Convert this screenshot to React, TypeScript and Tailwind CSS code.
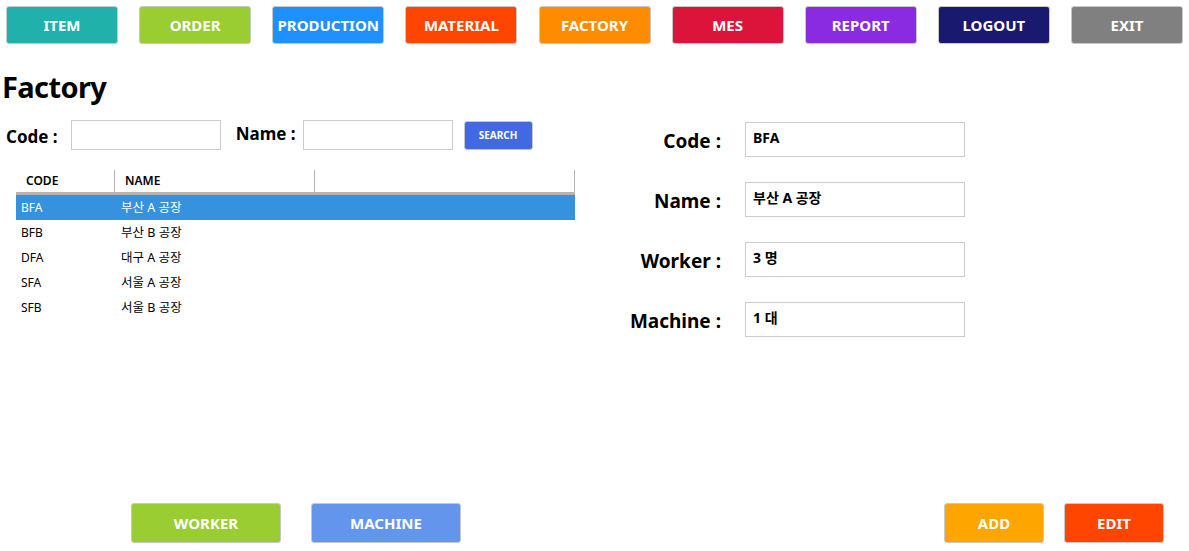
const navItems = [
  { label: "ITEM", color: "bg-[#20b2aa]" },
  { label: "ORDER", color: "bg-[#9acd32]" },
  { label: "PRODUCTION", color: "bg-[#1e90ff]" },
  { label: "MATERIAL", color: "bg-[#ff4500]" },
  { label: "FACTORY", color: "bg-[#ff8c00]" },
  { label: "MES", color: "bg-[#dc143c]" },
  { label: "REPORT", color: "bg-[#8a2be2]" },
  { label: "LOGOUT", color: "bg-[#191970]" },
  { label: "EXIT", color: "bg-[#808080]" },
];

const factories = [
  { code: "BFA", name: "부산 A 공장" },
  { code: "BFB", name: "부산 B 공장" },
  { code: "DFA", name: "대구 A 공장" },
  { code: "SFA", name: "서울 A 공장" },
  { code: "SFB", name: "서울 B 공장" },
];

const details = [
  { label: "Code :", value: "BFA" },
  { label: "Name :", value: "부산 A 공장" },
  { label: "Worker :", value: "3 명" },
  { label: "Machine :", value: "1 대" },
];

const font = { fontFamily: '"Noto Sans", "Noto Sans CJK KR", sans-serif' };

export default function App() {
  return (
    <div className="w-[1189px] h-[551px] bg-white text-black overflow-hidden" style={font}>
      {/* top menu */}
      <div className="flex justify-between w-[1183px] pl-[6px] pt-[6px] h-[50px]">
        {navItems.map((n) => (
          <button
            key={n.label}
            className={`${n.color} w-[112px] h-[38px] rounded-[3px] border border-[#c8c8c8] text-white font-bold text-[15px]`}
          >
            {n.label}
          </button>
        ))}
      </div>

      <h1 className="mt-[17px] h-[40px] leading-[40px] pl-[2px] text-[29px] tracking-[-0.6px] font-bold">Factory</h1>

      <div className="flex h-[390px] mt-[3px]">
        {/* left: search + list */}
        <div className="w-[575px]">
          <div className="flex items-center h-[30px] mt-[10px] pl-[6px]">
            <span className="text-[17px] font-bold mt-[4px]">Code :</span>
            <input className="ml-[13px] w-[150px] h-[30px] border border-[#cccccc] outline-none" />
            <span className="ml-[15px] text-[17px] font-bold -mt-[3px]">Name :</span>
            <input className="ml-[7px] w-[150px] h-[30px] border border-[#cccccc] outline-none" />
            <button className="ml-[11px] w-[69px] h-[29px] rounded-[3px] border border-[#c8c8c8] bg-[#4169e1] text-white text-[10px] font-bold">
              SEARCH
            </button>
          </div>

          <div className="ml-[16px] mt-[20px] w-[559px] text-[12px]">
            <div className="flex h-[22px] border-b-[3px] border-[#b4b4b4] box-content">
              <div className="w-[99px] pl-[10px] border-r border-[#b4b4b4] font-semibold flex items-center">CODE</div>
              <div className="w-[200px] pl-[10px] border-r border-[#b4b4b4] font-semibold flex items-center">NAME</div>
              <div className="flex-1 border-r border-[#b4b4b4]" />
            </div>
            {factories.map((f, i) => (
              <div
                key={f.code}
                className={`flex h-[25px] items-center pt-[1px] ${i === 0 ? "bg-[#3592de] text-white" : ""}`}
              >
                <div className="w-[100px] pl-[5px]">{f.code}</div>
                <div className="w-[200px] pl-[5px] text-[12.5px]">{f.name}</div>
              </div>
            ))}
          </div>
        </div>

        {/* right: detail form */}
        <div className="ml-[25px] pt-[12px] flex flex-col gap-[25px]">
          {details.map((d) => (
            <div key={d.label} className="flex items-center h-[35px]">
              <div className="w-[121px] text-right text-[19px] font-bold pt-[4px]">{d.label}</div>
              <div className="ml-[24px] w-[220px] h-[35px] border border-[#cccccc] pl-[7px] pt-[5px] text-[14px] font-bold leading-[20px]">
                {d.value}
              </div>
            </div>
          ))}
        </div>
      </div>

      {/* bottom buttons */}
      <div className="flex pt-[3px] pr-[25px]">
        <button className="ml-[131px] w-[150px] h-[40px] rounded-[3px] border border-[#c8c8c8] bg-[#9acd32] text-white font-bold text-[15px]">
          WORKER
        </button>
        <button className="ml-[30px] w-[150px] h-[40px] rounded-[3px] border border-[#c8c8c8] bg-[#6495ed] text-white font-bold text-[15px]">
          MACHINE
        </button>
        <button className="ml-auto w-[100px] h-[40px] rounded-[3px] border border-[#c8c8c8] bg-[#ffa500] text-white font-bold text-[15px]">
          ADD
        </button>
        <button className="ml-[20px] w-[100px] h-[40px] rounded-[3px] border border-[#c8c8c8] bg-[#ff4500] text-white font-bold text-[15px]">
          EDIT
        </button>
      </div>
    </div>
  );
}
